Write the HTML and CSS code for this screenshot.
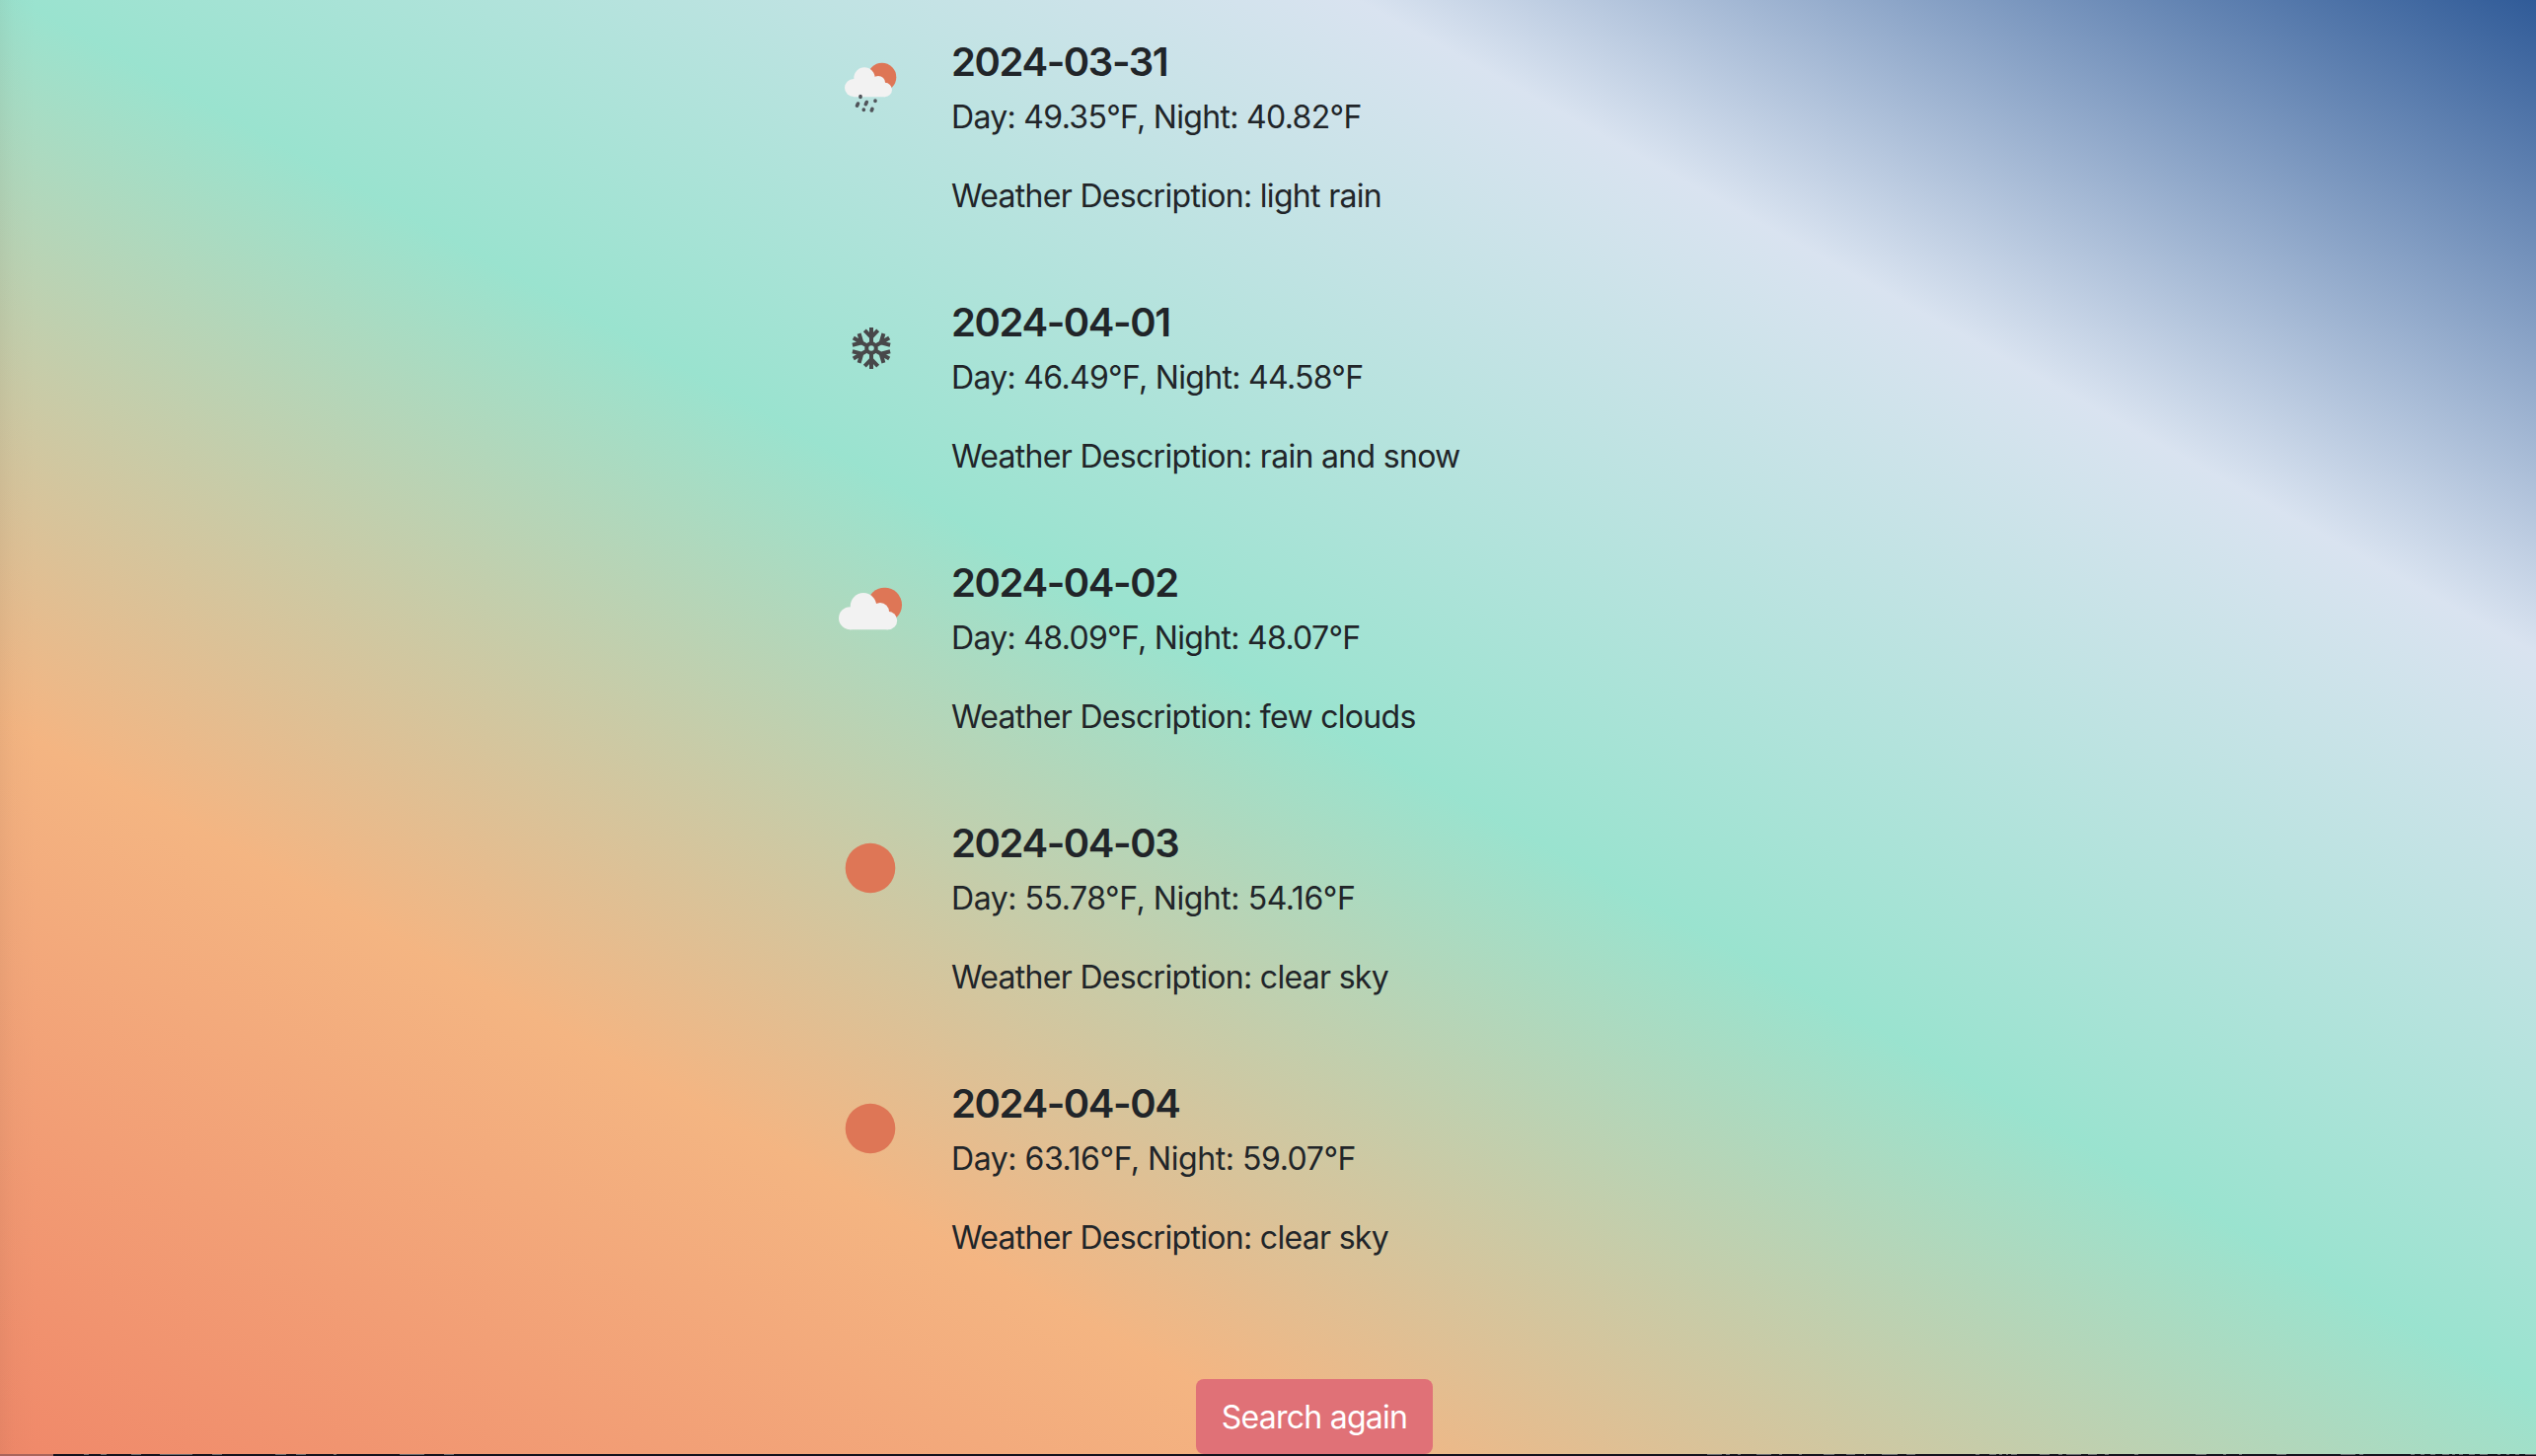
FILE: index.html
```html
<!DOCTYPE html>
<html lang="en">
<head>
<meta charset="utf-8">
<title>Weather forecast</title>
<link rel="stylesheet" href="styles.css">
</head>
<body>
<main class="forecast">
  <section class="day">
    <div class="icon">
      <svg class="glyph" viewBox="0 0 100 100">
        <circle class="sun" cx="53.8" cy="28.2" r="14.5"/>
        <g class="cloud"><circle cx="25" cy="39" r="9"/><circle cx="36" cy="29" r="10.700"/><circle cx="50" cy="34.200" r="7.200"/><circle cx="56.800" cy="41" r="7.200"/><path d="M25 30h24l8 6v12.200H25z"/></g>
        <path class="drops" d="M32 47.500v1M29.500 55l-1 2.200M38.300 53.500l-1 2.200M47 52v.5M35.300 61v.5M44 60.300l-.7 1.700"/>
      </svg>
    </div>
    <div class="info"><h2>2024-03-31</h2><p>Day: 49.35°F, Night: 40.82°F</p><p>Weather Description: light rain</p></div>
  </section>
  <section class="day">
    <div class="icon">
      <svg class="glyph" viewBox="0 4 100 100">
        <g class="flake"><circle cx="43" cy="43" r="4.800"/><path id="arm" d="M43 38.500V22M36.300 24.800l6.700 7 6.700-7"/><use href="#arm" transform="rotate(60 43 43)"/><use href="#arm" transform="rotate(120 43 43)"/><use href="#arm" transform="rotate(180 43 43)"/><use href="#arm" transform="rotate(240 43 43)"/><use href="#arm" transform="rotate(300 43 43)"/></g>
      </svg>
    </div>
    <div class="info"><h2>2024-04-01</h2><p>Day: 46.49°F, Night: 44.58°F</p><p>Weather Description: rain and snow</p></div>
  </section>
  <section class="day">
    <div class="icon">
      <svg class="glyph" viewBox="0 8 100 100">
        <circle class="sun" cx="56.5" cy="43.200" r="17.500"/>
        <g class="cloud"><circle cx="21.500" cy="56.700" r="11.500"/><circle cx="35" cy="44.300" r="13.200"/><circle cx="52" cy="50" r="9"/><circle cx="60" cy="59" r="9.200"/><path d="M21 46h30l9 6v16.200H21z"/></g>
      </svg>
    </div>
    <div class="info"><h2>2024-04-02</h2><p>Day: 48.09°F, Night: 48.07°F</p><p>Weather Description: few clouds</p></div>
  </section>
  <section class="day">
    <div class="icon"><svg class="glyph" viewBox="0 2 100 100"><circle class="sun" cx="42" cy="40" r="25.300"/></svg></div>
    <div class="info"><h2>2024-04-03</h2><p class="loose">Day: 55.78°F, Night: 54.16°F</p><p>Weather Description: clear sky</p></div>
  </section>
  <section class="day">
    <div class="icon"><svg class="glyph" viewBox="0 2 100 100"><circle class="sun" cx="42" cy="40" r="25.300"/></svg></div>
    <div class="info"><h2>2024-04-04</h2><p class="loose">Day: 63.16°F, Night: 59.07°F</p><p>Weather Description: clear sky</p></div>
  </section>
</main>
<button class="again">Search again</button>
<footer class="edge">
  <svg class="marks" viewBox="0 0 2570 2"><path d="M85 .5h5m12 0h6m25 0h10m19 0h33m20 0h10m54 0h11m10 0h10m28 0h3m64 0h25m20 0h10M1730 .5h15m4 0h4m8 0h3m16 0h15m8 0h3m17 0h3m22 0h11m12 0h9m9 0h2m16 0h16m9 0h9m61 0h4m10 0h7m3 0h3m4 0h2m3 0h6m23 0h10m9 0h4m4 0h15m7 0h9m8 0h4m26 0h4m58 0h11m17 0h3m13 0h3m35 0h10m55 0h15m4 0h4m48 0h4m6 0h4m6 0h5m7 0h7m3 0h3m4 0h4m6 0h6m5 0h8m10 0h3m6 0h3m6 0h4m6 0h11"/></svg>
</footer>
</body>
</html>
```
FILE: styles.css
```css
* { box-sizing: border-box; }
body {
  margin: 0;
  height: 1476px;
  overflow: hidden;
  display: flex;
  flex-direction: column;
  font-family: Inter, sans-serif;
  color: #212529;
  background:
    linear-gradient(90deg, rgba(60, 50, 40, .06), rgba(60, 50, 40, .02) 14px, transparent 36px),
    linear-gradient(29deg, #f08869 0, #f4b582 653px, #9ae3cf 1301px, #d9e3f0 1958px, #305b98 2537px);
}
.forecast { height: 1398px; padding-top: 38px; }
.day { display: flex; height: 264px; padding-left: 840px; }
.icon { width: 124px; padding-top: 12px; }
.glyph { display: block; width: 100px; height: 100px; }
.sun { fill: #de7656; }
.cloud { fill: #f2f2f2; }
.drops { fill: none; stroke: #50545a; stroke-width: 3.6; stroke-linecap: round; }
.flake { fill: none; stroke: #48484a; stroke-width: 4; }
.info { padding-top: 1px; }
.info h2 { margin: 0; font-size: 40px; line-height: 48px; font-weight: 560; letter-spacing: -1.4px; }
.info p { margin: 8px 0 32px; font-size: 32px; line-height: 48px; letter-spacing: -.69px; }
.info p.loose { letter-spacing: -.45px; }
.again {
  align-self: flex-start;
  flex: none;
  width: 240px;
  height: 76px;
  margin-left: 1212px;
  padding: 2px 0 0;
  border: 0;
  border-radius: 8px;
  background: #e07177;
  color: #fff;
  font: 400 32px/48px Inter, sans-serif;
  letter-spacing: -.75px;
}
.edge { flex: none; height: 2px; background: linear-gradient(90deg, #a9645b 54px, #15121d 54px); }
.marks { display: block; width: 2570px; height: 2px; stroke: #6b6a70; }
```
